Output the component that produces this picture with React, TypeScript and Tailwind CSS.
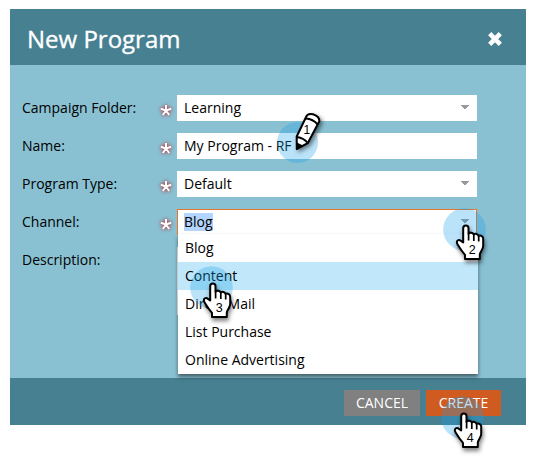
import React from 'react';

function Required() {
  return (
    <span className="mt-[6px] flex h-[20px] w-[20px] justify-center">
      <svg width="20" height="20" viewBox="0 0 20 20" className="overflow-visible">
        <g className="[filter:drop-shadow(0_0_1px_rgba(190,50,50,.75))_drop-shadow(0_0_2px_rgba(165,70,80,.8))]" stroke="#fff" strokeWidth="2" fill="none">
          <path d="M10 9.5V4M10 9.5L4.8 7.8M10 9.5L15.2 7.8M10 9.5L6.8 14M10 9.5L13.2 14" />
        </g>
      </svg>
    </span>
  );
}

function Arrow() {
  return (
    <svg width="8" height="4" viewBox="0 0 8 4" shapeRendering="crispEdges">
      <path d="M0 0h8v1H0zM1 1h6v1H1zM2 2h4v1H2zM3 3h2v1H3z" fill="#999" />
    </svg>
  );
}

type FieldProps = { label: string; value: string; select?: boolean; active?: boolean };

function Field({ label, value, select, active }: FieldProps) {
  return (
    <div className="flex h-[26px]">
      <div className="w-[134px] leading-[25px]">{label}</div>
      <Required />
      <div className="w-[1px]" />
      <div
        className={
          active
            ? 'flex h-[26px] w-[300px] justify-between border border-b-0 border-[#e5762e] bg-white pl-[6px] pr-[7px]'
            : 'flex h-[26px] w-[300px] justify-between bg-white pl-[7px] pr-[8px]'
        }
      >
        <span className={active ? 'my-[3px] h-[18px] bg-[#b3d4fd] leading-[18px]' : 'leading-[25px]'}>{value}</span>
        {select && <span className={active ? 'pt-[9px]' : 'pt-[10px]'}><Arrow /></span>}
      </div>
    </div>
  );
}

function Hand({ n }: { n: number }) {
  return (
    <svg width="44" height="56" viewBox="0 0 44 56" className="block overflow-visible">
      <circle cx="21.5" cy="21.5" r="21.3" fill="#1c9fe8" fillOpacity=".3" />
      <g className="[filter:drop-shadow(1px_3px_2px_rgba(0,0,0,.5))]">
        <path
          d="M20.2 34.5V20.2c0-3.5 5.3-3.5 5.3 0v5.6c1.2-1.8 4.6-1.5 5.2.8 1.4-1.4 4.4-.8 4.9 1.3 2.3-.9 4.6.5 4.6 2.9v7.2c0 3.4-3 5.5-3.4 8.6v4.4H22v-4.2c-2.6-3-5.2-6.8-7.4-10.4-2.1-3.6 1.1-5.4 3.4-3.5z"
          fill="#fff" stroke="#000" strokeWidth="2" strokeLinejoin="round"
        />
        <path d="M25.6 25v7.5M30.8 26.5v6.5M35.7 28v5.5" stroke="#000" strokeWidth="1.7" />
      </g>
      <text x="29.2" y="46.3" textAnchor="middle" className="font-['Liberation_Sans',sans-serif] text-[12.5px]" fill="#000">{n}</text>
    </svg>
  );
}

function Pencil() {
  return (
    <svg width="50" height="52" viewBox="0 0 50 52" className="block overflow-visible">
      <circle cx="20.5" cy="30.5" r="20.5" fill="#1c9fe8" fillOpacity=".3" />
      <g className="[filter:drop-shadow(2px_2px_2px_rgba(0,0,0,.5))]">
        <path d="M19.7 24.5L29.2 4.8Q30.5 1 36 2.2Q43.2 4.8 42.2 9.5L30.7 31.2L19.8 37Z" fill="#fff" stroke="#000" strokeWidth="2" strokeLinejoin="round" />
        <path d="M28.8 6.5Q36 7 40.7 12.5M19.8 25Q27 26 30.7 31" fill="none" stroke="#000" strokeWidth="2" />
        <path d="M19.8 31L25.3 33.7L19.8 37Z" fill="#000" stroke="#000" />
      </g>
      <text x="29.8" y="22.3" textAnchor="middle" className="font-['Liberation_Sans',sans-serif] text-[12px]" fill="#000">1</text>
    </svg>
  );
}

const options = ['Blog', 'Content', 'Direct Mail', 'List Purchase', 'Online Advertising'];

export default function App() {
  return (
    <div className="relative h-[459px] w-[535px] overflow-hidden bg-white pl-[10px] pt-[9px] font-['Open_Sans',sans-serif] text-[14px] text-black">
      <div className="flex h-[416px] w-[516px] flex-col bg-[#89c1d3]">
        <header className="flex h-[56px] items-center justify-between bg-[#468091] pl-[17px] pr-[23px]">
          <h1 className="pt-[3px] text-[24px] leading-[32px] text-white [-webkit-text-stroke:0.35px_white]">New Program</h1>
          <svg width="16" height="16" viewBox="0 0 16 16" className="mt-[4px]">
            <path d="M2.7 2.7L13.3 13.3M13.3 2.7L2.7 13.3" stroke="#fff" strokeWidth="4.6" />
          </svg>
        </header>
        <main className="relative flex h-[313px] flex-col gap-[12px] pl-[12px] pt-[30px]">
          <Field label="Campaign Folder:" value="Learning" select />
          <Field label="Name:" value="My Program - RF" />
          <Field label="Program Type:" value="Default" select />
          <Field label="Channel:" value="Blog" select active />
          <div className="flex">
            <div className="w-[155px] leading-[25px]">Description:</div>
            <div className="h-[68px] w-[300px] bg-white" />
          </div>
          <ul className="absolute left-[168px] top-[169px] w-[300px] bg-white shadow-[0_3px_4px_rgba(0,0,0,.5)]">
            {options.map((o) => (
              <li key={o} className={o === 'Content' ? 'h-[28px] bg-[#c1e8fa] pl-[7px] leading-[27px]' : 'h-[28px] pl-[7px] leading-[27px]'}>{o}</li>
            ))}
          </ul>
        </main>
        <footer className="flex h-[47px] justify-end gap-[6px] bg-[#468091] pr-[25px] pt-[12px] text-white">
          <button className="h-[26px] w-[76px] bg-[#808080] leading-[26px]">CANCEL</button>
          <button className="h-[26px] w-[75px] bg-[#d05b20] leading-[26px]">CREATE</button>
        </footer>
      </div>
      <div className="absolute left-[277px] top-[112px]"><Pencil /></div>
      <div className="absolute left-[443px] top-[208px]"><Hand n={2} /></div>
      <div className="absolute left-[190px] top-[266px]"><Hand n={3} /></div>
      <div className="absolute left-[441px] top-[396px]"><Hand n={4} /></div>
    </div>
  );
}
